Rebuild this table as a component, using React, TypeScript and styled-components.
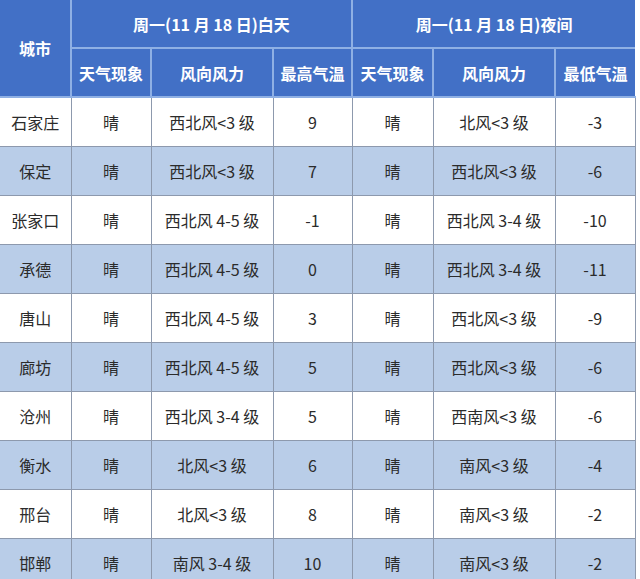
import React from 'react'
import styled, { createGlobalStyle } from 'styled-components'

const GlobalStyle = createGlobalStyle`
  html, body {
    margin: 0;
    padding: 0;
    background: #ffffff;
    font-family: 'Noto Sans CJK SC', 'Noto Sans', sans-serif;
  }
`

const Page = styled.div`
  width: 640px;
  height: 579px;
  overflow: hidden;
  background: #ffffff;
`

const Table = styled.table`
  width: 635px;
  border-collapse: collapse;
  table-layout: fixed;
`

const HeadCell = styled.th`
  height: 47px;
  padding: 0;
  background: #4270c6;
  color: #ffffff;
  font-size: 16px;
  font-weight: 700;
  text-align: center;
  vertical-align: middle;
  border: 2px solid #8fb0e4;
  &:first-child {
    border-left: none;
  }
`

const TopHeadCell = styled(HeadCell)`
  border-top: none;
`

const EdgeHeadCell = styled(HeadCell)`
  border-right: none;
`

const Row = styled.tr<{ $shaded: boolean }>`
  background: ${p => (p.$shaded ? '#b9cde8' : '#ffffff')};
`

const Cell = styled.td`
  height: 48px;
  padding: 0;
  text-align: center;
  vertical-align: middle;
  color: #2b2b2b;
  font-size: 16px;
  border: 1px solid #8d99ad;
  &:first-child {
    border-left: none;
  }
`

const widths = [71, 80, 122, 79, 81, 122, 80]

const rows = [
  ['石家庄', '晴', '西北风<3 级', '9', '晴', '北风<3 级', '-3'],
  ['保定', '晴', '西北风<3 级', '7', '晴', '西北风<3 级', '-6'],
  ['张家口', '晴', '西北风 4-5 级', '-1', '晴', '西北风 3-4 级', '-10'],
  ['承德', '晴', '西北风 4-5 级', '0', '晴', '西北风 3-4 级', '-11'],
  ['唐山', '晴', '西北风 4-5 级', '3', '晴', '西北风<3 级', '-9'],
  ['廊坊', '晴', '西北风 4-5 级', '5', '晴', '西北风<3 级', '-6'],
  ['沧州', '晴', '西北风 3-4 级', '5', '晴', '西南风<3 级', '-6'],
  ['衡水', '晴', '北风<3 级', '6', '晴', '南风<3 级', '-4'],
  ['邢台', '晴', '北风<3 级', '8', '晴', '南风<3 级', '-2'],
  ['邯郸', '晴', '南风 3-4 级', '10', '晴', '南风<3 级', '-2'],
]

export default function App() {
  return (
    <Page>
      <GlobalStyle />
      <Table>
        <colgroup>
          {widths.map((w, i) => (
            <col key={i} style={{ width: w }} />
          ))}
        </colgroup>
        <thead>
          <tr>
            <TopHeadCell rowSpan={2}>城市</TopHeadCell>
            <TopHeadCell colSpan={3}>周一(11 月 18 日)白天</TopHeadCell>
            <EdgeHeadCell colSpan={3} style={{ borderTop: 'none' }}>
              周一(11 月 18 日)夜间
            </EdgeHeadCell>
          </tr>
          <tr>
            <HeadCell>天气现象</HeadCell>
            <HeadCell>风向风力</HeadCell>
            <HeadCell>最高气温</HeadCell>
            <HeadCell>天气现象</HeadCell>
            <HeadCell>风向风力</HeadCell>
            <EdgeHeadCell>最低气温</EdgeHeadCell>
          </tr>
        </thead>
        <tbody>
          {rows.map((r, i) => (
            <Row key={r[0]} $shaded={i % 2 === 1}>
              {r.map((v, j) => (
                <Cell key={j}>{v}</Cell>
              ))}
            </Row>
          ))}
        </tbody>
      </Table>
    </Page>
  )
}
